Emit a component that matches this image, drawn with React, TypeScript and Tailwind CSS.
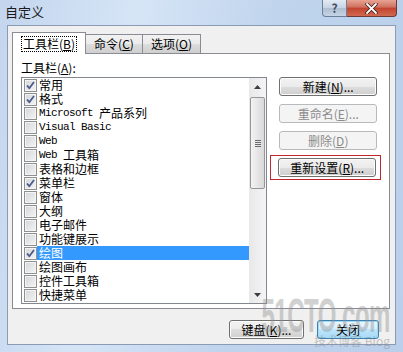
import type { ReactNode } from "react";
import clsx from "clsx";

type Item = { t: string; c?: boolean; s?: boolean };

const items: Item[] = [
  { t: "常用", c: true },
  { t: "格式", c: true },
  { t: "Microsoft 产品系列" },
  { t: "Visual Basic" },
  { t: "Web" },
  { t: "Web 工具箱" },
  { t: "表格和边框" },
  { t: "菜单栏", c: true },
  { t: "窗体" },
  { t: "大纲" },
  { t: "电子邮件" },
  { t: "功能键展示" },
  { t: "绘图", c: true, s: true },
  { t: "绘图画布" },
  { t: "控件工具箱" },
  { t: "快捷菜单" },
];

// latin runs get the half-width mono look of SimSun
function Mixed({ text }: { text: string }) {
  return (
    <>
      {text.split(/([\x00-\x7f]+)/).map((part, i) =>
        /^[\x00-\x7f]+$/.test(part) ? (
          <span key={i} className="whitespace-pre font-['Liberation_Mono',monospace] text-[11px] tracking-[-0.6px]">
            {part}
          </span>
        ) : (
          <span key={i}>{part}</span>
        ),
      )}
    </>
  );
}

function Check({ on }: { on?: boolean }) {
  return (
    <div className="flex h-[13px] w-[13px] shrink-0 items-center justify-center border border-[#8e8f8f] bg-[linear-gradient(135deg,#d4d6d9_0%,#f4f4f4_100%)] shadow-[inset_0_0_0_1px_#f4f4f4]">
      {on && (
        <svg width="11" height="11" viewBox="0 0 11 11">
          <path d="M2 5.5 L4.3 8.2 L9 2" fill="none" stroke="#4a5b8c" strokeWidth="1.8" strokeLinejoin="round" />
        </svg>
      )}
    </div>
  );
}

function Btn({ children, disabled, primary, className }: { children: ReactNode; disabled?: boolean; primary?: boolean; className?: string }) {
  return (
    <div
      className={clsx(
        "flex h-[19px] items-center justify-center rounded-[3px] border text-[12px] leading-none",
        disabled
          ? "border-[#b7babc] bg-[#f4f4f4] text-[#8b8b8b]"
          : primary
            ? "border-[#3c7fb1] bg-[linear-gradient(#eaf6fd_0%,#d9f0fc_50%,#bee6fd_50%,#a7d9f5_100%)] text-black shadow-[inset_0_0_0_1px_#9fdcf7]"
            : "border-[#707070] bg-[linear-gradient(#f2f2f2_0%,#ebebeb_50%,#dddddd_50%,#cfcfcf_100%)] text-black shadow-[inset_0_0_0_1px_#fcfcfc]",
        className,
      )}
    >
      {children}
    </div>
  );
}

export default function App() {
  return (
    <div className="relative flex h-[352px] w-[403px] flex-col overflow-hidden bg-[linear-gradient(100deg,#c3d6ee_0%,#d6e5f6_30%,#c0d4ed_60%,#b9cfeb_100%)] font-['Noto_Sans_CJK_SC',sans-serif] text-[12px] text-black">
      {/* title bar */}
      <div className="flex h-[25px] shrink-0 items-start">
        <div className="pl-[5px] pt-[4px] text-[13px] leading-[16px] text-[#1b1b1b]">自定义</div>
        <div className="ml-auto mr-[6px] flex">
          <div className="flex h-[17px] w-[25px] items-center justify-center rounded-bl-[4px] border border-t-0 border-[#6d7f98] bg-[linear-gradient(#e2eaf4_0%,#c7d3e3_50%,#aebdd1_50%,#c6d4e6_100%)] text-[12px] font-bold leading-none text-[#3d4f68]">
            ?
          </div>
          <div className="flex h-[17px] w-[50px] items-center justify-center rounded-br-[4px] border border-l-0 border-t-0 border-[#6d3a36] bg-[linear-gradient(#e8a493_0%,#d0705f_45%,#c2432f_50%,#d06a4e_100%)]">
            <svg width="13" height="11" viewBox="0 0 13 11">
              <path d="M2 1 L11 10 M11 1 L2 10" stroke="#3a1a16" strokeWidth="3.4" strokeLinecap="round" />
              <path d="M2 1 L11 10 M11 1 L2 10" stroke="#ffffff" strokeWidth="1.8" strokeLinecap="round" />
            </svg>
          </div>
        </div>
      </div>

      {/* client area */}
      <div className="mx-[7px] mb-[7px] flex flex-1 flex-col border border-[#8a9bb3] bg-[#f0f0f0] pl-[4px] pt-[6px]">
        {/* tabs */}
        <div className="relative z-10 flex h-[21px] items-start">
          <div className="-mb-[1px] flex h-[22px] w-[74px] items-center justify-center border border-b-0 border-[#898c95] bg-white">
            <span className="border border-dotted border-black px-[1px] leading-[14px]">
              工具栏(<u>B</u>)
            </span>
          </div>
          <div className="mt-[2px] flex h-[19px] w-[57px] items-center justify-center border border-b-0 border-l-0 border-[#898c95] bg-[linear-gradient(#f2f2f2_0%,#ebebeb_50%,#dddddd_50%,#cfcfcf_100%)]">
            命令(<u>C</u>)
          </div>
          <div className="mt-[2px] flex h-[19px] w-[58px] items-center justify-center border border-b-0 border-l-0 border-[#898c95] bg-[linear-gradient(#f2f2f2_0%,#ebebeb_50%,#dddddd_50%,#cfcfcf_100%)]">
            选项(<u>O</u>)
          </div>
        </div>

        {/* tab panel */}
        <div className="flex h-[256px] w-[378px] flex-col border border-[#898c95] bg-white pl-[8px] pt-[5px]">
          <div className="h-[17px] leading-[17px]">
            工具栏(<u>A</u>):
          </div>
          <div className="mt-[1px] flex gap-[11px]">
            {/* list box */}
            <div className="flex h-[227px] w-[249px] border border-[#828790] bg-white">
              <div className="flex flex-1 flex-col">
                {items.map((it) => (
                  <div key={it.t} className="flex h-[14px] items-center">
                    <div className="ml-[2px]">
                      <Check on={it.c} />
                    </div>
                    <div
                      className={clsx(
                        "flex h-[14px] flex-1 items-center whitespace-nowrap pl-[2px] leading-[14px]",
                        it.s && "bg-[#3399ff] text-white",
                      )}
                    >
                      <Mixed text={it.t} />
                    </div>
                  </div>
                ))}
              </div>
              {/* scrollbar */}
              <div className="flex w-[17px] flex-col bg-[linear-gradient(90deg,#e8e8e8_0%,#f4f4f4_100%)]">
                <div className="flex h-[17px] items-center justify-center">
                  <svg width="7" height="4" viewBox="0 0 7 4">
                    <path d="M0 4 L3.5 0 L7 4 Z" fill="#3e3e3e" />
                  </svg>
                </div>
                <div className="mx-[1px] mt-[2px] flex h-[92px] items-center justify-center rounded-[2px] border border-[#979797] bg-[linear-gradient(90deg,#f3f3f3_0%,#e6e6e6_50%,#d9d9d9_100%)]">
                  <div className="flex flex-col gap-[1px]">
                    <div className="h-[1px] w-[6px] bg-[#6a6a6a]" />
                    <div className="h-[1px] w-[6px] bg-[#6a6a6a]" />
                    <div className="h-[1px] w-[6px] bg-[#6a6a6a]" />
                    <div className="h-[1px] w-[6px] bg-[#6a6a6a]" />
                  </div>
                </div>
                <div className="mt-auto flex h-[17px] items-center justify-center">
                  <svg width="7" height="4" viewBox="0 0 7 4">
                    <path d="M0 0 L3.5 4 L7 0 Z" fill="#3e3e3e" />
                  </svg>
                </div>
              </div>
            </div>

            {/* command buttons */}
            <div className="flex w-[112px] flex-col gap-[8px]">
              <div className="pl-[1px]">
                <Btn className="w-[98px]">
                  新建(<u>N</u>)...
                </Btn>
              </div>
              <div className="pl-[1px]">
                <Btn disabled className="w-[98px]">
                  重命名(<u>E</u>)...
                </Btn>
              </div>
              <div className="pl-[1px]">
                <Btn disabled className="w-[98px]">
                  删除(<u>D</u>)
                </Btn>
              </div>
              <div className="-ml-[8px] -mt-[3px] w-[111px] border border-[#c0262d] px-[7px] py-[2px]">
                <Btn className="w-[98px]">
                  重新设置(<u>R</u>)...
                </Btn>
              </div>
            </div>
          </div>
        </div>

        {/* bottom buttons */}
        <div className="mt-[11px] flex justify-end gap-[13px] pr-[16px]">
          <Btn className="w-[75px]">
            键盘(<u>K</u>)...
          </Btn>
          <Btn primary className="w-[62px]">
            关闭
          </Btn>
        </div>
      </div>

      {/* watermark */}
      <div className="pointer-events-none absolute right-[13px] top-[292px] flex flex-col items-end opacity-40">
        <div className="origin-right scale-x-[0.5] whitespace-nowrap font-['Liberation_Sans',sans-serif] text-[48px] font-bold leading-[48px] tracking-[-1px] text-[#8f8f8f]">
          51CTO.com
        </div>
        <div className="-mt-[6px] whitespace-nowrap text-[12px] leading-[13px] text-[#7f7f7f]">技术博客 Blog</div>
      </div>
    </div>
  );
}
